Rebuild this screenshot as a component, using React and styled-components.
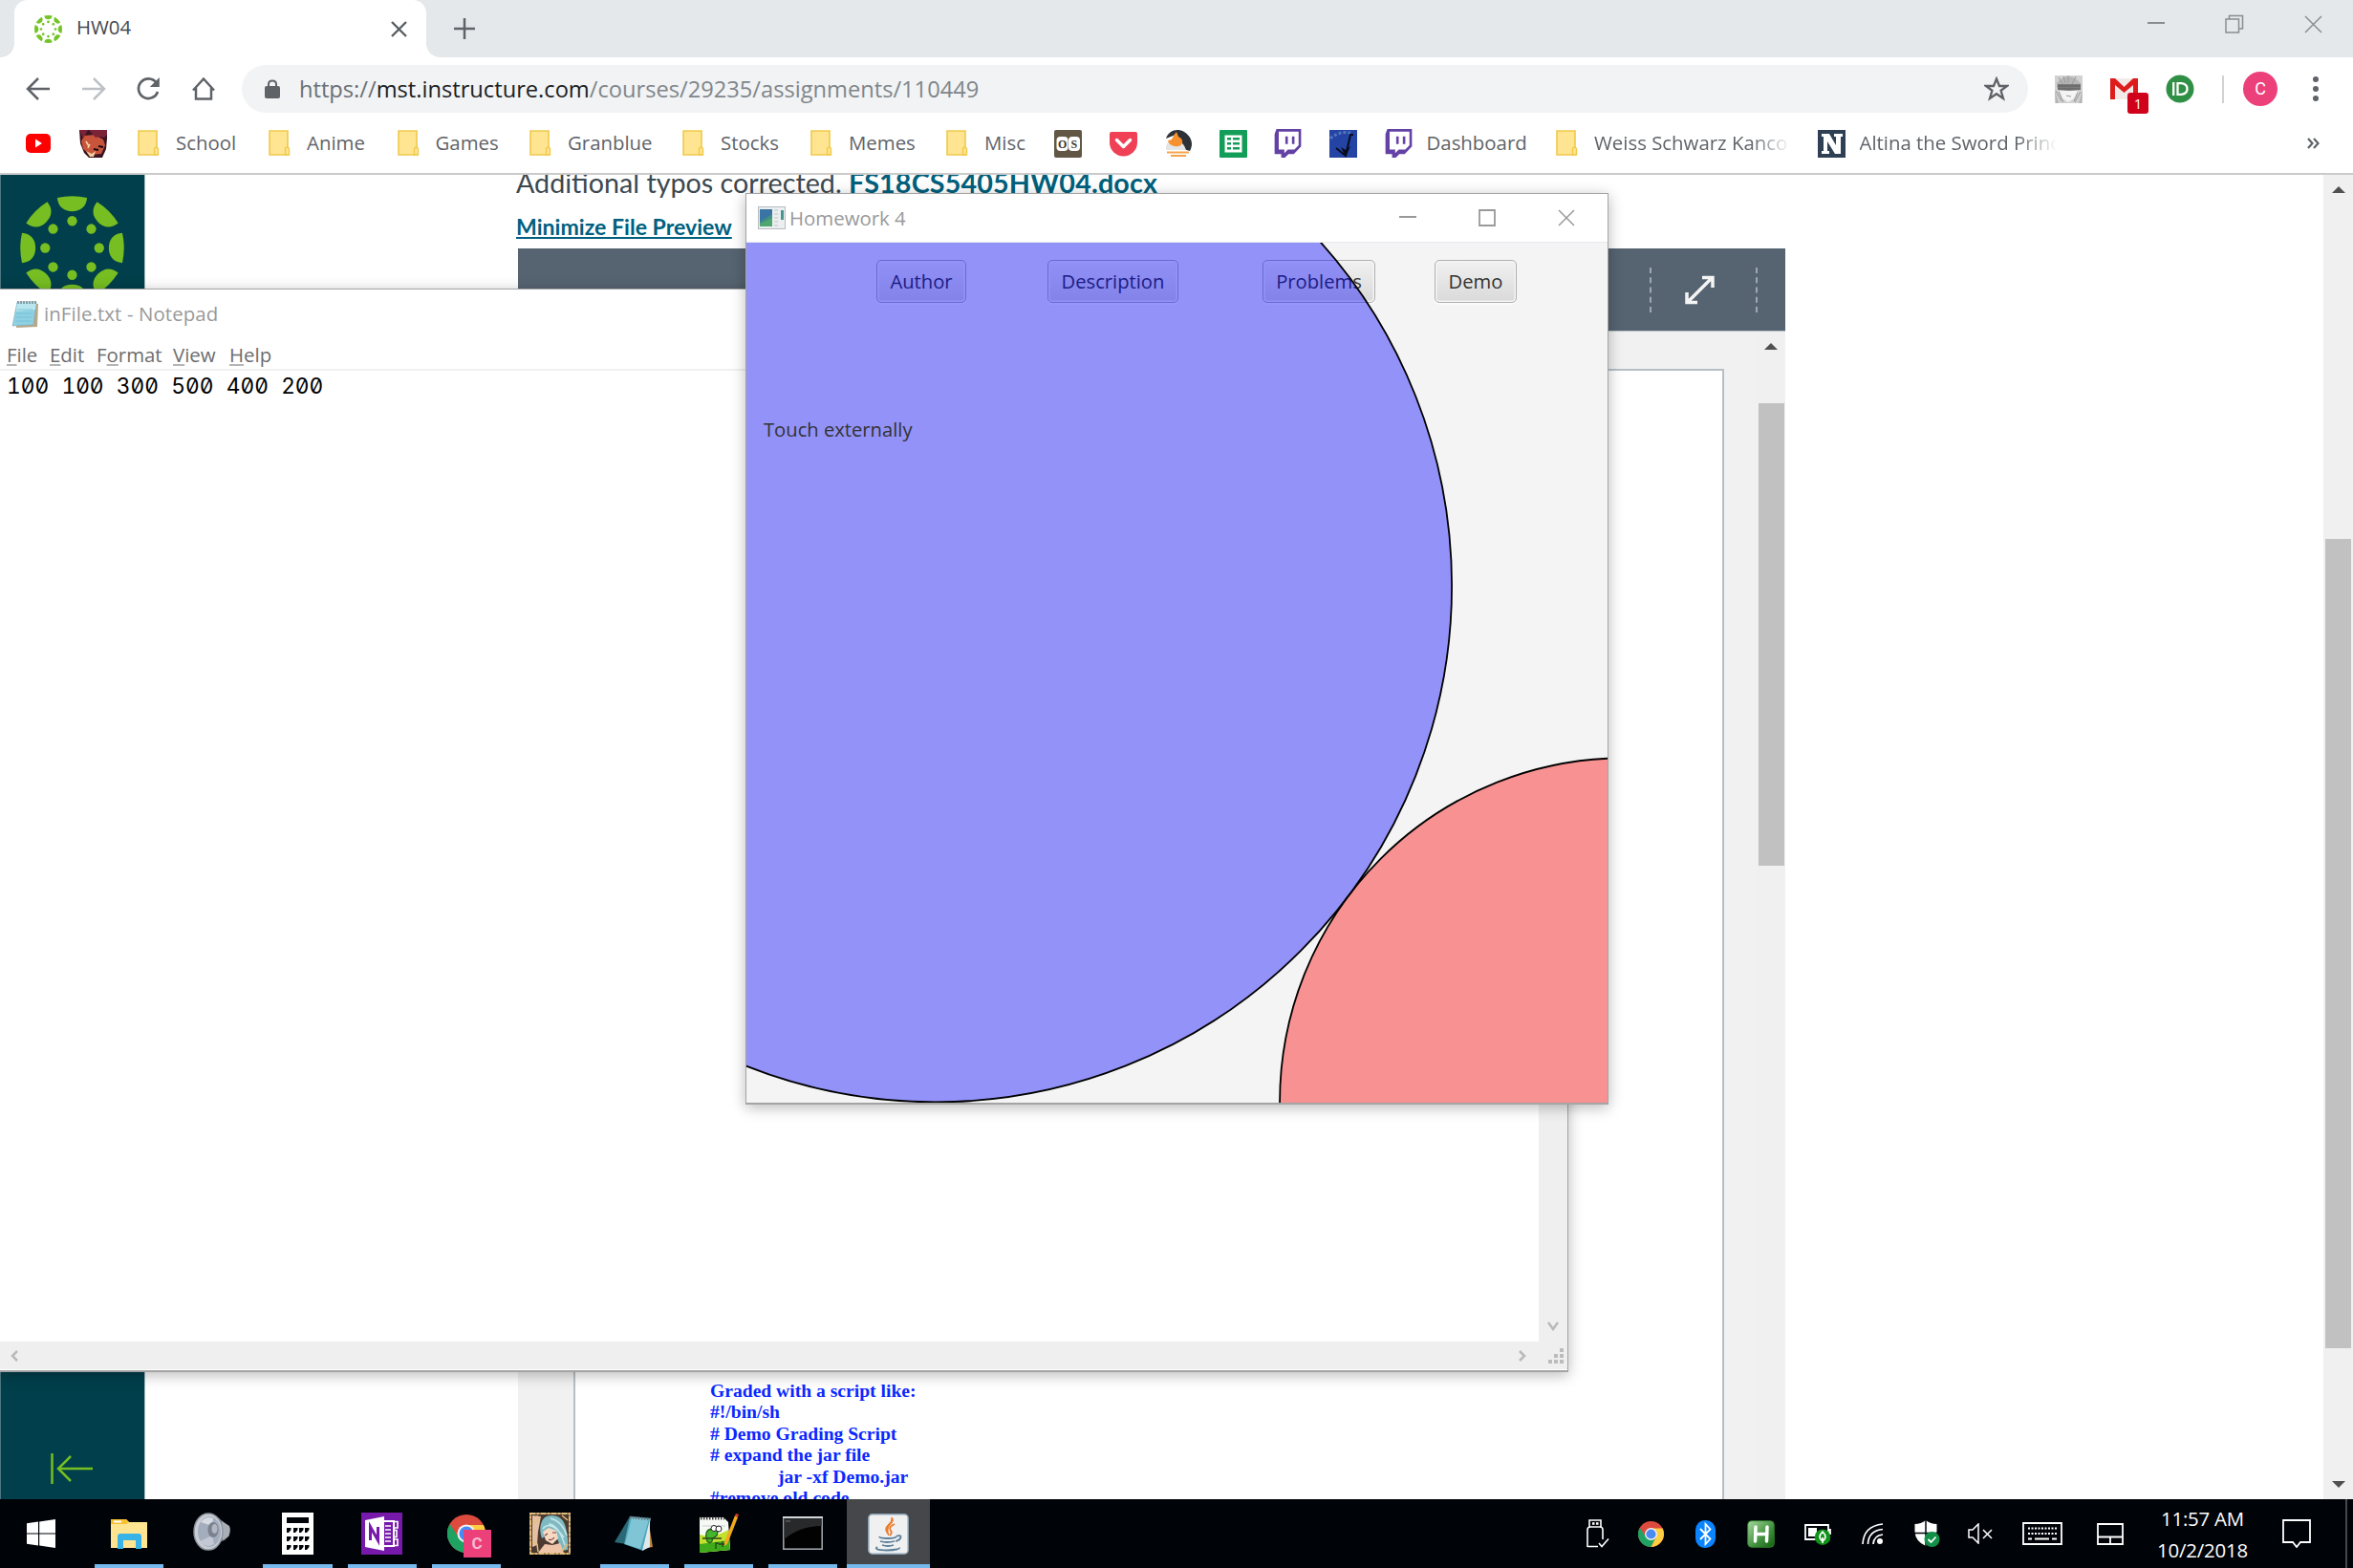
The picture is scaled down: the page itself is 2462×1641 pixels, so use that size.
import React from "react";
import styled, { createGlobalStyle } from "styled-components";

const ui = `"Open Sans", "Noto Sans", sans-serif`;

const GlobalStyle = createGlobalStyle`
  * { box-sizing: border-box; }
  body { margin: 0; overflow: hidden; background: #fff; font-family: ${ui}; }
  svg { display: block; flex: none; }
`;

/* ---------- shared ---------- */

const Desktop = styled.div`
  position: relative;
  display: flex;
  flex-direction: column;
  width: 2462px;
  height: 1641px;
  overflow: hidden;
`;

const Text = styled.span`
  flex: none;
  white-space: nowrap;
  font-size: ${(p) => p.$size || 20.4}px;
  line-height: 1.3;
  letter-spacing: ${(p) => p.$track || 0}px;
  color: ${(p) => p.$color || "inherit"};
`;

const Spacer = styled.div`
  flex: 1;
`;

/* ---------- browser frame ---------- */

const TabStrip = styled.div`
  display: flex;
  align-items: flex-start;
  height: 60px;
  flex: none;
  padding-left: 15px;
  background: #e4e8eb;
`;

const Tab = styled.div`
  position: relative;
  display: flex;
  align-items: center;
  width: 431px;
  height: 60px;
  padding: 0 20px 0 21px;
  background: #fff;
  border-radius: 14px 14px 0 0;
  color: #45494d;
  &::before,
  &::after {
    content: "";
    position: absolute;
    bottom: 0;
    width: 14px;
    height: 14px;
  }
  &::before {
    left: -14px;
    background: radial-gradient(circle at 0 0, transparent 13.5px, #fff 14px);
  }
  &::after {
    right: -14px;
    background: radial-gradient(circle at 100% 0, transparent 13.5px, #fff 14px);
  }
`;

const TabTitle = styled(Text)`
  margin-left: 15px;
  padding-bottom: 3px;
  flex: 1;
`;

const NewTab = styled.div`
  display: flex;
  align-items: center;
  height: 60px;
  margin-left: 29px;
`;

const WindowButtons = styled.div`
  display: flex;
  align-items: center;
  gap: ${(p) => p.$gap}px;
  padding-right: ${(p) => p.$right}px;
  height: 50px;
`;

const Toolbar = styled.div`
  display: flex;
  align-items: center;
  flex: none;
  height: 66px;
  padding: 0 27px;
  background: #fff;
`;

const NavButtons = styled.div`
  display: flex;
  gap: 31.5px;
  width: 226px;
`;

const Omnibox = styled.div`
  display: flex;
  align-items: center;
  width: 1869px;
  height: 50px;
  padding: 0 20px 0 24px;
  border-radius: 25px;
  background: #f1f3f4;
`;

const Url = styled(Text)`
  margin-left: 20px;
  flex: 1;
  color: #80868b;
  b {
    font-weight: 400;
    color: #202124;
  }
  i {
    font-style: normal;
    color: #6b7075;
  }
`;

const Extensions = styled.div`
  display: flex;
  align-items: center;
  gap: 29px;
  margin-left: 28px;
`;

const GmailBadge = styled.div`
  position: relative;
  width: 29px;
  height: 29px;
  span {
    position: absolute;
    left: 18px;
    top: 18px;
    width: 22px;
    height: 22px;
    border-radius: 3px;
    background: #d0021b;
    color: #fff;
    font: 15px/22px ${ui};
    text-align: center;
  }
`;

const Divider = styled.div`
  width: 2px;
  height: 29px;
  background: #d0d3d6;
`;

const Avatar = styled.div`
  width: 36px;
  height: 36px;
  margin: 0 7px 0 -9px;
  border-radius: 50%;
  background: #ec407a;
  color: #fff;
  font: 18px/36px Roboto, sans-serif;
  text-align: center;
`;

const BookmarkBar = styled.div`
  display: flex;
  align-items: center;
  flex: none;
  height: 57px;
  padding: 0 35px 7px 25px;
  border-bottom: 2px solid #cbcbcb;
  background: #fff;
  color: #5f6368;
`;

const Bookmark = styled.div`
  display: flex;
  align-items: center;
  flex: none;
  width: ${(p) => p.$width}px;
`;

const BookmarkLabel = styled(Text)`
  margin-left: ${(p) => p.$left}px;
  padding-bottom: 1px;
  ${(p) =>
    p.$fade &&
    `mask-image: linear-gradient(90deg, #000 ${p.$fade - 42}px, transparent ${p.$fade}px);`}
`;

/* ---------- web page ---------- */

const Page = styled.div`
  display: flex;
  flex: 1;
  min-height: 0;
  background: #fff;
`;

const CanvasNav = styled.nav`
  display: flex;
  flex-direction: column;
  justify-content: space-between;
  width: 152px;
  padding: 22px 0 15px 20px;
  border-left: 1px solid #4d7780;
  border-right: 1px solid #a9bcc2;
  background: #003f4b;
`;

const CollapseIcon = styled.div`
  padding-left: 31px;
`;

const Article = styled.main`
  flex: 1;
  min-width: 0;
  padding-left: 388px;
  overflow: hidden;
  display: flex;
  flex-direction: column;
`;

const Paragraph = styled.p`
  flex: none;
  margin: -9px 0 0;
  font: 28.7px/34px Lato, sans-serif;
  color: #3c484f;
  white-space: nowrap;
  b {
    color: #00607c;
    letter-spacing: 0.15px;
  }
`;

const PreviewLink = styled.a`
  flex: none;
  align-self: flex-start;
  height: 52px;
  padding-top: 15px;
  font: 700 23.1px/28px Lato, sans-serif;
  color: #006080;
  text-decoration: underline;
  text-decoration-thickness: 2px;
  text-underline-offset: 2px;
`;

const Preview = styled.section`
  display: flex;
  flex-direction: column;
  flex: 1;
  width: 1326px;
  margin-left: 2px;
  background: #f1f1f1;
`;

const PreviewTools = styled.div`
  display: flex;
  align-items: center;
  justify-content: flex-end;
  flex: none;
  height: 86px;
  padding-right: 29px;
  background: #566471;
  svg {
    margin: 0 42px 0 34px;
  }
`;

const DashedRule = styled.div`
  height: 47px;
  border-left: 2px dashed #9fa8b0;
`;

const PreviewBody = styled.div`
  display: flex;
  flex: 1;
  min-height: 0;
  border-top: 1px solid #b9c2c8;
`;

const Sheet = styled.div`
  display: flex;
  flex-direction: column;
  justify-content: flex-end;
  width: 1204px;
  margin: 39px 34px 0 58px;
  padding: 0 0 0 141px;
  border: 2px solid #b7bfc6;
  border-bottom: 0;
  background: #fff;
  overflow: hidden;
`;

const Script = styled.div`
  flex: none;
  margin-bottom: -10.5px;
  font: 700 19.6px/22.4px "Liberation Serif", serif;
  color: #0a28ff;
  white-space: pre;
`;

const ScriptLine = styled.div`
  padding-left: ${(p) => (p.$indent ? 71 : 0)}px;
`;

const ScrollTrack = styled.div`
  display: flex;
  flex-direction: column;
  align-items: center;
  flex: none;
  width: ${(p) => p.$width}px;
  padding: ${(p) => p.$pad};
  background: #f0f0f0;
`;

const ScrollThumb = styled.div`
  width: 27px;
  height: ${(p) => p.$height}px;
  margin: ${(p) => p.$top}px 0 auto;
  background: #c1c1c1;
`;

const Triangle = styled.div`
  flex: none;
  border: 7px solid transparent;
  border-top-width: ${(p) => (p.$down ? 7 : 0)}px;
  border-bottom-width: ${(p) => (p.$down ? 0 : 7)}px;
  border-${(p) => (p.$down ? "top" : "bottom")}-color: #505050;
`;

/* ---------- floating windows ---------- */

const AppWindow = styled.div`
  position: absolute;
  display: flex;
  flex-direction: column;
  left: ${(p) => p.$x}px;
  top: ${(p) => p.$y}px;
  width: ${(p) => p.$w}px;
  height: ${(p) => p.$h}px;
  border: solid #a4a4a4;
  border-width: 1px 1px 2px ${(p) => (p.$x > 0 ? 1 : 0)}px;
  background: #fff;
  box-shadow: 0 3px 14px rgba(0, 0, 0, 0.28);
`;

const TitleBar = styled.div`
  display: flex;
  align-items: center;
  flex: none;
  height: ${(p) => p.$height}px;
  padding-left: 12px;
  color: #999;
`;

const WindowTitle = styled(Text)`
  margin-left: 4px;
  flex: 1;
`;

const MenuBar = styled.div`
  display: flex;
  align-items: center;
  height: 34px;
  flex: none;
  padding: 2px 0 0 7px;
  border-bottom: 2px solid #f0f0f0;
  color: #6d6d6d;
`;

const MenuItem = styled(Text)`
  width: ${(p) => p.$w}px;
  u {
    text-decoration-thickness: 2px;
    text-underline-offset: 2px;
    text-decoration-color: #b5b5b5;
  }
`;

const EditorRow = styled.div`
  display: flex;
  flex: 1;
`;

const Editor = styled.pre`
  flex: 1;
  margin: 0;
  padding: 1px 0 0 7px;
  font: 22.7px/30px Inter, monospace;
  font-feature-settings: "tnum", "zero";
  word-spacing: 7.2px;
  color: #000;
`;

const NotepadScroll = styled.div`
  display: flex;
  flex-direction: ${(p) => (p.$side ? "column" : "row")};
  align-items: center;
  justify-content: ${(p) => (p.$side ? "flex-end" : "space-between")};
  flex: none;
  width: ${(p) => (p.$side ? "30px" : "auto")};
  height: ${(p) => (p.$side ? "auto" : "30px")};
  padding: ${(p) => (p.$side ? "0 0 11px" : "0 4px 0 10px")};
  background: #efefef;
  border-bottom: ${(p) => (p.$side ? 0 : 1)}px solid #fff;
`;

const ScrollEnd = styled.div`
  display: flex;
  align-items: center;
  gap: 22px;
`;

const Stage = styled.div`
  position: relative;
  flex: 1;
  overflow: hidden;
  background: #f4f4f4;
  border-top: 1px solid #e8e8ee;
`;

const ButtonRow = styled.div`
  display: flex;
  padding: 18px 0 0 136px;
`;

const FxButton = styled.button`
  width: ${(p) => p.$w}px;
  height: 45px;
  margin: 0 ${(p) => p.$after || 0}px 0 0;
  padding: 0 0 1px;
  border: 1.5px solid #b0b0b0;
  border-radius: 5px;
  background: linear-gradient(#f1f1f1, #d9d9d9);
  box-shadow: inset 0 0 0 1.5px #f4f4f4, 0 2px 0 #fafafa;
  font: 20.2px/38px ${ui};
  color: #333;
`;

const Shapes = styled.svg`
  position: absolute;
  inset: 0;
`;

const StageLabel = styled(Text)`
  position: absolute;
  left: 18px;
  top: 182px;
  color: #333;
`;

/* ---------- taskbar ---------- */

const Taskbar = styled.footer`
  display: flex;
  flex: none;
  height: 72px;
  background: #000308;
`;

const TaskItem = styled.div`
  position: relative;
  display: flex;
  align-items: center;
  justify-content: center;
  width: ${(p) => p.$width || 88.1}px;
  margin-left: ${(p) => (p.$active ? 2 : 0)}px;
  padding: 0 ${(p) => p.$shift || 0}px ${(p) => p.$lift || 0}px 0;
  background: ${(p) => (p.$active ? "#45474a" : "transparent")};
  &::after {
    content: "";
    position: absolute;
    bottom: 0;
    left: ${(p) => (p.$active ? 0 : 8)}px;
    right: ${(p) => (p.$active ? 0 : 8)}px;
    height: ${(p) => (p.$open || p.$active ? 4 : 0)}px;
    background: #76b9ed;
  }
`;

const ProfileBadge = styled.span`
  position: absolute;
  left: 41px;
  top: 32px;
  width: 29px;
  height: 29px;
  background: #ec407a;
  color: #f8bbd0;
  font: 700 17px/29px Roboto, sans-serif;
  text-align: center;
`;

const TrayItem = styled.div`
  display: flex;
  align-items: center;
  justify-content: center;
  width: ${(p) => p.$width}px;
`;

const Clock = styled.div`
  display: flex;
  flex-direction: column;
  align-items: center;
  justify-content: center;
  width: 127px;
  padding-top: 1px;
  color: #fff;
  font-size: 20.4px;
  line-height: 33px;
  letter-spacing: -0.2px;
`;

const ShowDesktop = styled.div`
  width: 8px;
  border-left: 2px solid #46484b;
`;

/* ---------- icons ---------- */

const CanvasMark = ({ size, color = "#76be22" }) => (
  <svg width={size} height={size} viewBox="-54 -54 108 108" fill={color}>
    {[0, 45, 90, 135, 180, 225, 270, 315].map((a) => (
      <g key={a} transform={`rotate(${a})`}>
        <path d="M-15.5 -52 Q0 -55.5 15.5 -52 C14.5 -42 8 -38 0 -38 C-8 -38 -14.5 -42 -15.5 -52Z" />
        <circle cy="-28" r="5.1" />
      </g>
    ))}
  </svg>
);

const Cross = ({ size, color = "#8a8d90", width = 1.5 }) => (
  <svg width={size} height={size} viewBox={`0 0 ${size} ${size}`} stroke={color} strokeWidth={width}>
    <path d={`M1 1L${size - 1} ${size - 1}M${size - 1} 1L1 ${size - 1}`} />
  </svg>
);

const Dash = ({ size = 18, color = "#8a8d90" }) => (
  <svg width={size} height="22">
    <path d={`M0 10H${size}`} stroke={color} strokeWidth="2" />
  </svg>
);

const FolderIcon = () => (
  <svg width="24" height="30" viewBox="0 0 24 30">
    <path d="M2 2H21V27H2Z" fill="#ffe591" stroke="#efc94c" strokeWidth="1.6" />
    <path d="M18.5 27V20.5Q20.5 17.5 22.5 20.5V27Z" fill="#ffe591" stroke="#efc94c" strokeWidth="1.4" />
  </svg>
);

const Twitch = () => (
  <svg width="29" height="30" viewBox="0 0 24 24" preserveAspectRatio="none" fill="#6441a5">
    <path d="M2.149 0L.537 4.119v16.836h5.731V24h3.224l3.045-3.045h4.657l6.269-6.269V0zM21.313 13.612l-3.582 3.582H12l-3.045 3.045v-3.045H4.119V2.149h17.194zM17.731 6.269v6.262h-2.149V6.269zM12 6.269v6.262H9.851V6.269z" />
  </svg>
);

const Chrome = ({ size }) => (
  <svg width={size} height={size} viewBox="-24 -24 48 48">
    <circle r="24" fill="#dd4b3e" />
    <path d="M-20.8 -12A24 24 0 0 0 0 24L9.5 5.5L-9.5 5.5Z" fill="#1ea362" />
    <path d="M21.5 -10.8H0L9.5 5.5L0 24A24 24 0 0 0 21.5 -10.8Z" fill="#ffcd40" />
    <circle r="11.5" fill="#f1f1f1" />
    <circle r="9" fill="#4a8af4" />
  </svg>
);

const Chevron = ({ d, w = 10, h = 12 }) => (
  <svg width={w} height={h} viewBox={`0 0 ${w} ${h}`}>
    <path d={d} fill="none" stroke="#b9b9b9" strokeWidth="2.5" />
  </svg>
);

const NotepadIcon = ({ size = 30 }) => (
  <svg width={size} height={size} viewBox="0 0 30 30">
    <path d="M8 3L28 4L27 28L5 29Z" fill="#b9a887" />
    <path d="M6 2L26 2L23 26L1 27Z" fill="#8fd0e2" stroke="#7fa9b5" strokeWidth=".6" />
    <path d="M6 2L26 2L25 10L5 12Z" fill="#b9e6ef" />
    <path d="M7 1v3M10 1v3M13 1v3M16 1v3M19 1v3M22 1v3M25 1v3" stroke="#4c5a60" />
    <path d="M6 10H22M5.5 14H21.5M5 18H21M4.5 22H20.5" stroke="#69bcd2" strokeWidth=".7" />
  </svg>
);

const NavIcons = () => (
  <NavButtons>
    {["#5f6368", "#bdc1c6"].map((c, i) => (
      <svg key={c} width="26" height="26" viewBox="0 0 26 26" fill="none" stroke={c} strokeWidth="2.5">
        <path d={i ? "M1 13H23M13 2L24 13L13 24" : "M25 13H3M13 2L2 13L13 24"} />
      </svg>
    ))}
    <svg width="26" height="26" viewBox="0 0 26 26" fill="none" stroke="#5f6368" strokeWidth="2.7">
      <path d="M21.5 6.5A10.300 10.300 0 1 0 23 16" />
      <path d="M24.8 1V11H14.8Z" fill="#5f6368" stroke="none" />
    </svg>
    <svg width="26" height="26" viewBox="0 0 26 26" fill="none" stroke="#5f6368" strokeWidth="2.5">
      <path d="M5 12V23.500H21V12M2 14.500L13 2.500L24 14.500" />
    </svg>
  </NavButtons>
);

const bookmarkIcons = {
  youtube: (
    <svg width="30" height="22" viewBox="0 0 30 22">
      <rect x="2" y="1" width="26" height="20" rx="5" fill="#f00" />
      <path d="M12 6.500L19 11L12 15.500Z" fill="#fff" />
    </svg>
  ),
  imp: (
    <svg width="29" height="29" viewBox="0 0 29 29">
      <path d="M0 0H29V9L28 20L24 29H10L5 24L1 14Z" fill="#3a1420" />
      <path d="M5 6L16 5L25 10L27 16L23 25L12 26L4 20L2 12Z" fill="#c9543c" />
      <path d="M0 0H9L4 9ZM10 0L17 8L21 7L26 8L29 5V0Z" fill="#7d2338" />
      <path d="M7 12L10 17M11 15L9 19" stroke="#f4d2a0" strokeWidth="1.600" fill="none" />
      <path d="M7 22L13 25L17 22L15 28H11Z" fill="#f1cf9f" />
      <path d="M15 20L20 21M20 17L25 18" stroke="#160b0e" strokeWidth="2" />
    </svg>
  ),
  os: (
    <svg width="29" height="29" viewBox="0 0 29 29">
      <rect width="29" height="29" rx="2" fill="#625645" />
      <rect x="2.500" y="7" width="12" height="15" rx="4" fill="#fff" />
      <rect x="15" y="7" width="12" height="15" rx="4" fill="#fff" />
      <text x="4" y="19" fontFamily="Liberation Serif" fontWeight="700" fontSize="12" fill="#3f372c">O</text>
      <text x="17.500" y="19" fontFamily="Liberation Serif" fontWeight="700" fontSize="12" fill="#3f372c">S</text>
    </svg>
  ),
  pocket: (
    <svg width="29" height="29" viewBox="0 0 29 29">
      <path d="M2 2H27Q29 2 29 4V13A14.500 14.500 0 0 1 0 13V4Q0 2 2 2Z" fill="#ef4056" />
      <path d="M7.500 10.500L14.500 17.500L21.500 10.500" fill="none" stroke="#fff" strokeWidth="3.500" strokeLinecap="round" strokeLinejoin="round" />
    </svg>
  ),
  bird: (
    <svg width="30" height="30" viewBox="0 0 30 30">
      <path d="M2 10C5 1 14 -1 21 3C29 8 31 16 27 23L20 21L12 6Z" fill="#2d3138" />
      <path d="M2 22Q1 13 8 13H17Q21 16 23 22Z" fill="#e4e5e7" />
      <path d="M13 3L15 8Q20 10 19 15Q17 19 11 18Q5 17 4 12Q8 12 9 9Q10 6 13 3Z" fill="#f7912d" />
      <path d="M3 24.500H26M7 28H23" stroke="#f5a34d" strokeWidth="1.800" />
    </svg>
  ),
  sheets: (
    <svg width="29" height="29" viewBox="0 0 29 29">
      <rect width="29" height="29" rx="1" fill="#129d58" />
      <path d="M5.500 5.500H23.500V23.500H5.500Z" fill="#fff" />
      <path d="M8 8H12V10.500H8ZM14 8H21V10.500H14ZM8 13H12V15.500H8ZM14 13H21V15.500H14ZM8 18H12V20.500H8ZM14 18H21V20.500H14Z" fill="#129d58" />
    </svg>
  ),
  twitch: <Twitch />,
  check: (
    <svg width="29" height="29" viewBox="0 0 29 29">
      <rect width="29" height="29" fill="#2344a4" />
      <path d="M1 9Q10 1 22 3" stroke="#5573bd" strokeWidth="3" fill="none" strokeDasharray="3 2" />
      <path d="M7 19L17 27L22 5H25" stroke="#070b1c" strokeWidth="2" fill="none" />
      <path d="M12 18L17 28L22 17L17 21Z" fill="#070b1c" />
    </svg>
  ),
  novel: (
    <svg width="29" height="29" viewBox="0 0 29 29">
      <rect width="29" height="29" fill="#2f4054" />
      <path d="M4 4H12L19 16V7H17V4H26V7H24V25H18L10 12V22H12V25H4V22H6V7H4Z" fill="#fff" />
    </svg>
  ),
};

const bookmarks = [
  { icon: "youtube", width: 58 },
  { icon: "imp", width: 60 },
  { folder: true, label: "School", width: 137 },
  { folder: true, label: "Anime", width: 134.5 },
  { folder: true, label: "Games", width: 138.5 },
  { folder: true, label: "Granblue", width: 160 },
  { folder: true, label: "Stocks", width: 134 },
  { folder: true, label: "Memes", width: 142 },
  { folder: true, label: "Misc", width: 114 },
  { icon: "os", width: 58 },
  { icon: "pocket", width: 57 },
  { icon: "bird", width: 58 },
  { icon: "sheets", width: 57 },
  { icon: "twitch", width: 58 },
  { icon: "check", width: 58 },
  { icon: "twitch", label: "Dashboard", width: 178 },
  { folder: true, label: "Weiss Schwarz Kanco", width: 275, fade: 206 },
  { icon: "novel", label: "Altina the Sword Princ", width: 260, fade: 206 },
];

const task = {
  start: (
    <svg width="30" height="30" viewBox="0 0 30 30" fill="#fff">
      <path d="M0 4.300L12 2.600V14.400H0ZM13.200 2.400L30 0V14.400H13.200ZM0 15.600H12V27.400L0 25.700ZM13.200 15.600H30V30L13.200 27.600Z" />
    </svg>
  ),
  explorer: (
    <svg width="39" height="32" viewBox="0 0 39 32">
      <path d="M0 1H16L19 4H38V31H0Z" fill="#ffe591" />
      <path d="M0 1H16L19 4L16 6H0Z" fill="#f8c130" />
      <path d="M3 2.500H11V4.500H3Z" fill="#fff" />
      <path d="M7 32V19Q7 16 10 16H29Q32 16 32 19V32H26V23H13V32Z" fill="#38b3e8" />
    </svg>
  ),
  volume: (
    <svg width="40" height="40" viewBox="0 0 40 40">
      <path d="M17 1L27 6L36 13Q39 16 38 24L33 29L27 31L16 39Z" fill="#6f747d" />
      <path d="M30 9L38 14Q40 19 37 25L31 29Z" fill="#a9aeb7" />
      <ellipse cx="16" cy="20" rx="15" ry="19" fill="#c9cdd4" stroke="#8f959f" strokeWidth="1.500" />
      <ellipse cx="17" cy="20" rx="12" ry="16" fill="#a3adbd" />
      <path d="M8 10Q14 3 21 6L20 14Z" fill="#d5dae3" />
      <path d="M7 30Q14 38 22 33L20 24Z" fill="#c2c9d4" />
      <ellipse cx="21" cy="18" rx="5.500" ry="8" fill="#7b818d" />
      <ellipse cx="22.500" cy="17" rx="3" ry="5" fill="#b3b9c4" />
    </svg>
  ),
  calc: (
    <svg width="33" height="44" viewBox="0 0 33 44">
      <path d="M0 0H33V44H0Z" fill="#fff" />
      <path d="M5 5H28V11H5Z" fill="#000308" />
      {[16, 25, 34].map((y) =>
        [5, 12, 18, 24].map((x) => <path key={`${x}-${y}`} d={`M${x} ${y}h4.500v2l-2.500 3h-2z`} fill="#000308" />)
      )}
    </svg>
  ),
  onenote: (
    <svg width="43" height="44" viewBox="0 0 43 44">
      <rect width="43" height="44" fill="#7719aa" />
      <path d="M24 9H34V35H24" fill="none" stroke="#fff" strokeWidth="2" />
      <path d="M35 9.500H38V16H35M35 18.500H37V25.500H35M35 28H38V34.500H35" fill="none" stroke="#fff" strokeWidth="1.600" />
      <path d="M25 14H31M25 18H31M25 22H31M25 26H31M25 30H31" stroke="#fff" strokeWidth="1.600" />
      <path d="M4 8L24 4V40L4 36Z" fill="#fff" />
      <path d="M9.500 29V15L17.500 29V15" fill="none" stroke="#7719aa" strokeWidth="3" />
    </svg>
  ),
  girl: (
    <svg width="43" height="44" viewBox="0 0 43 44">
      <rect width="43" height="44" fill="#b08d58" />
      <rect x="2" y="2" width="39" height="40" fill="#4b3a30" />
      <path d="M3 3L12 4L9 20L8 34L3 36Z" fill="#e6bfa2" />
      <path d="M12 12Q14 3 23 3Q35 3 38 16Q41 27 40 39L33 40Q31 28 24 20L13 27Q10 18 12 12Z" fill="#7fbac2" />
      <path d="M14 20L20 16L28 19L30 27L24 33L17 29Z" fill="#f7d8c3" />
      <path d="M9 42L16 33L24 34L32 32L36 42Z" fill="#efc5a9" />
      <path d="M14 17Q22 7 36 26M20 12Q30 12 37 34M22 6Q34 9 39 24" stroke="#c6e6e9" fill="none" strokeWidth="1.500" />
      <path d="M16 24L19 22M24 21L28 21M20 28Q23 30 26 26" stroke="#7a4038" strokeWidth="1.200" fill="none" />
      <path d="M3 12L9 8L8 3M3 30L8 33L9 41M34 3L40 8M33 41L40 33" stroke="#e3c07e" strokeWidth="1.500" fill="none" />
      <rect x="1" y="1" width="41" height="42" fill="none" stroke="#e0bd7d" strokeWidth="2" strokeDasharray="5 2 2 2" />
    </svg>
  ),
  notepad: (
    <svg width="42" height="40" viewBox="0 0 42 40">
      <path d="M35 4L40 34L34 35Z" fill="#b5853d" />
      <path d="M16 2L12 31L0 29Z" fill="#2b6876" />
      <path d="M16 2L38 4L30 38L10 31Z" fill="#4fa5ba" />
      <path d="M18 3L36 5L27 36L11 31Z" fill="#8fd0de" opacity=".75" />
      <path d="M37 5L37 34L29 38Z" fill="#dfe8ea" />
      <path d="M16 3L38 5" stroke="#6b777c" strokeWidth="3" strokeDasharray="1.500 1.500" />
    </svg>
  ),
  npp: (
    <svg width="42" height="42" viewBox="0 0 42 42">
      <path d="M1 4H26L31 9L33 38L1 41Z" fill="#f7faf4" />
      <path d="M1 22Q16 26 31 17L33 38L1 41Z" fill="#c2e02e" />
      <path d="M1 32L32 28L33 38L1 41Z" fill="#3fab1b" />
      <path d="M2 5H27" stroke="#3c3c3c" strokeWidth="3" strokeDasharray="1.500 1.500" />
      <path d="M4 13H28" stroke="#c5cdd6" />
      <path d="M9 29Q5 17 14 16Q22 16 19 23Q14 26 14 29Q12 32 9 29Z" fill="#45b52c" stroke="#215f14" strokeWidth="1.300" />
      <circle cx="16" cy="15.500" r="3" fill="#fff" stroke="#222" />
      <circle cx="21" cy="16" r="3" fill="#fff" stroke="#222" />
      <path d="M4 26H24M18 30V37M18 31H21M21 32H28M25 29V35" stroke="#25451c" strokeWidth="1.300" />
      <path d="M27 30L27 34L30 32L41 4L38 2Z" fill="#f3a81e" />
      <path d="M38 2L39 0L42 1L41 4Z" fill="#cf3d2e" />
    </svg>
  ),
  cmd: (
    <svg width="42" height="35" viewBox="0 0 42 35">
      <rect x=".8" y=".8" width="40.400" height="33.400" fill="#020202" stroke="#9ba1a8" strokeWidth="1.600" />
      <path d="M1.500 2H40.500V10Q18 10 1.500 24Z" fill="#27292b" />
      <path d="M0 1H42" stroke="#d3d6d9" strokeWidth="2" />
      <path d="M3 5H8" stroke="#777" />
    </svg>
  ),
  java: (
    <svg width="43" height="43" viewBox="0 0 43 43">
      <rect x=".8" y=".8" width="41.400" height="41.400" rx="4" fill="#f0f0f0" stroke="#8ba2b3" strokeWidth="1.500" />
      <path d="M25 4Q26 8 21 12Q16 16 22 23Q19 15 24 11Q28 7 25 4Z" fill="#ea7b2a" stroke="#ea7b2a" />
      <path d="M28 11Q21 14 24 18Q26 20 23 23" fill="none" stroke="#ea7b2a" strokeWidth="1.800" />
      <path d="M12 24Q12 26 21 26Q29 26 30 24M13 29Q20 31 28 29M15 33Q21 35 27 33M30 23.500Q36 22 34 26Q33 28 29 29M10 35Q5 38 20 38.500Q34 38 33 35.500" fill="none" stroke="#5b7f9b" strokeWidth="1.800" />
    </svg>
  ),
};

const tray = {
  usb: (
    <svg width="24" height="30" viewBox="0 0 24 30" fill="none" stroke="#fff" strokeWidth="1.600">
      <path d="M3 8V1H15V8M1 29V11Q1 8 4 8H14Q17 8 17 11V21M1 28.500H12M13 25L16 28.500L23 20.500" />
      <path d="M6 4.500H8.500M10 4.500H12.500" strokeWidth="2.500" />
    </svg>
  ),
  bluetooth: (
    <svg width="21" height="29" viewBox="0 0 21 29">
      <rect width="21" height="29" rx="10" fill="#0a84ff" />
      <path d="M5 9L15.500 19.500L10.500 25V4L15.500 9.500L5 20" fill="none" stroke="#fff" strokeWidth="1.800" />
    </svg>
  ),
  hkey: (
    <svg width="29" height="29" viewBox="0 0 29 29">
      <defs>
        <linearGradient id="hk" x1="0" y1="0" x2="1" y2="1">
          <stop offset="0" stopColor="#a5d99d" />
          <stop offset=".6" stopColor="#3f8f3d" />
          <stop offset="1" stopColor="#14600f" />
        </linearGradient>
      </defs>
      <rect x=".7" y=".7" width="27.600" height="27.600" rx="4" fill="url(#hk)" stroke="#2d7a2b" />
      <path d="M9 7L8.500 22M21 7L20.500 22M9 14.500H21" stroke="#fff" strokeWidth="3.500" strokeLinecap="round" />
    </svg>
  ),
  battery: (
    <svg width="28" height="24" viewBox="0 0 28 24">
      <path d="M1 3H25V18H1ZM25 8H27V12H25" fill="none" stroke="#fff" strokeWidth="1.800" />
      <path d="M4 6H13V15H4Z" fill="#fff" />
      <circle cx="19" cy="15.700" r="8.300" fill="#0f9318" />
      <path d="M19 22V16M19 10Q13 16 19 20Q25 16 19 10Z" fill="none" stroke="#fff" strokeWidth="1.700" />
    </svg>
  ),
  wifi: (
    <svg width="23" height="23" viewBox="0 0 23 23" fill="none" stroke="#fff" strokeWidth="1.700">
      <path d="M1 22Q2 3 22 1M6.500 22Q7 8 22 6.500M12 22Q12.500 13 22 12" />
      <circle cx="19" cy="19" r="3" fill="#fff" stroke="none" />
    </svg>
  ),
  shield: (
    <svg width="27" height="29" viewBox="0 0 27 29">
      <path d="M12 0Q17 4 23.500 4V12Q22 22 12 27Q1 22 .500 12V4Q7 4 12 0Z" fill="#fff" />
      <path d="M12 0V27M0 13.500H24" stroke="#000308" strokeWidth="1.500" />
      <circle cx="18.500" cy="20" r="8" fill="#129048" />
      <path d="M14.500 20L17.500 23L22.500 17.500" fill="none" stroke="#fff" strokeWidth="1.800" />
    </svg>
  ),
  mute: (
    <svg width="26" height="22" viewBox="0 0 26 22" fill="none" stroke="#fff" strokeWidth="1.500">
      <path d="M1 7H5L11 1V21L5 15H1ZM16 7L25 16M25 7L16 16" />
    </svg>
  ),
  keyboard: (
    <svg width="42" height="24" viewBox="0 0 42 24" fill="none" stroke="#fff" strokeWidth="1.800">
      <path d="M1 1H41V23H1Z" />
      <path d="M6 6.500H37M6 12H37" strokeDasharray="2 1.500" />
      <path d="M6 17.500H10M13 17.500H28M31 17.500H36" />
    </svg>
  ),
  touchpad: (
    <svg width="28" height="23" viewBox="0 0 28 23" fill="none" stroke="#fff" strokeWidth="1.800">
      <path d="M1 1H27V22H1ZM1 14.500H27M14 14.500V22" />
    </svg>
  ),
  notice: (
    <svg width="30" height="30" viewBox="0 0 30 30" fill="none" stroke="#fff" strokeWidth="1.800">
      <path d="M1 1H29V24H19L15 29L11 24H1Z" />
    </svg>
  ),
};

const ExtensionIcons = () => (
  <Extensions>
    <svg width="29" height="29" viewBox="0 0 29 29">
      <path d="M0 0H29V29H0Z" fill="#d2d2d2" />
      <path d="M5 16H24L20 24L14 28L8 24Z" fill="#f4f4f4" />
      <path d="M2 8Q14 -6 27 8V13L14 9L2 13ZM0 16L4 29H1ZM29 16L25 29H28Z" fill="#b5b5b5" />
      <path d="M3 9H27V15L15 16L3 15Z" fill="#7c7c7c" />
      <path d="M3 11H27M3 14H27" stroke="#5e5e5e" />
      <path d="M4 2L8 9M9 1L11 8M14 0V8M22 1L18 9M1 16L7 27M4 17L9 28M27 17L21 28M24 18L20 27M12 21L17 22" stroke="#9a9a9a" />
    </svg>
    <GmailBadge>
      <svg width="29" height="25" viewBox="0 0 29 25">
        <path d="M0 3H29V25H0Z" fill="#f3e9e9" />
        <path d="M0 3H5L14.500 12L24 3H29V25H24V10L14.500 18L5 10V25H0Z" fill="#dd1c1c" />
      </svg>
      <span>1</span>
    </GmailBadge>
    <svg width="30" height="30" viewBox="0 0 30 30">
      <circle cx="15" cy="15" r="14.500" fill="#2f8f45" />
      <path d="M8.200 8V22M12.500 9.200H16.500Q22.500 10 22.500 15Q22.500 20 16.500 20.800H12.500Z" fill="none" stroke="#fff" strokeWidth="2.300" />
    </svg>
    <Divider />
    <Avatar>C</Avatar>
    <svg width="8" height="28" viewBox="0 0 8 28" fill="#5f6368">
      <circle cx="4" cy="4" r="3" />
      <circle cx="4" cy="14" r="3" />
      <circle cx="4" cy="24" r="3" />
    </svg>
  </Extensions>
);

/* ---------- composition ---------- */

const BrowserFrame = () => (
  <>
    <TabStrip>
      <Tab>
        <CanvasMark size={29} color="#74c425" />
        <TabTitle>HW04</TabTitle>
        <Cross size={17} color="#5a5e62" width={2.4} />
      </Tab>
      <NewTab>
        <svg width="22" height="22">
          <path d="M11 0V22M0 11H22" stroke="#5f6368" strokeWidth="2.500" />
        </svg>
      </NewTab>
      <Spacer />
      <WindowButtons $gap={63} $right={32}>
        <Dash />
        <svg width="20" height="20" fill="none" stroke="#8a8d90" strokeWidth="1.500">
          <path d="M1 5H14.500V19H1ZM4.500 5V1.500H18.500V15H14.500" />
        </svg>
        <Cross size={19} />
      </WindowButtons>
    </TabStrip>
    <Toolbar>
      <NavIcons />
      <Omnibox>
        <svg width="16" height="20" viewBox="0 0 16 20">
          <path d="M4 8V5Q4 1.500 8 1.500Q12 1.500 12 5V8" fill="none" stroke="#5f6368" strokeWidth="2" />
          <rect y="7" width="16" height="13" rx="2" fill="#5f6368" />
        </svg>
        <Url $size={23.66}>
          <i>https://</i>
          <b>mst.instructure.com</b>/courses/29235/assignments/110449
        </Url>
        <svg width="26" height="26" viewBox="0 0 26 26">
          <path d="M13 2.500L16 10H24L17.600 14.800L20 23L13 18.200L6 23L8.400 14.800L2 10H10Z" fill="none" stroke="#5f6368" strokeWidth="2.300" />
        </svg>
      </Omnibox>
      <ExtensionIcons />
    </Toolbar>
    <BookmarkBar>
      {bookmarks.map((b, i) => (
        <Bookmark key={i} $width={b.width}>
          {b.folder ? <FolderIcon /> : bookmarkIcons[b.icon]}
          {b.label && (
            <BookmarkLabel $left={b.folder ? 17 : 14.5} $fade={b.fade}>
              {b.label}
            </BookmarkLabel>
          )}
        </Bookmark>
      ))}
      <Spacer />
      <svg width="13" height="12" fill="none" stroke="#5f6368" strokeWidth="2.200">
        <path d="M1 1L5.500 6L1 11M7 1L11.500 6L7 11" />
      </svg>
    </BookmarkBar>
  </>
);

const script = [
  "Graded with a script like:",
  "#!/bin/sh",
  "# Demo Grading Script",
  "# expand the jar file",
  "jar -xf Demo.jar",
  "#remove old code",
];

const WebPage = () => (
  <Page>
    <CanvasNav>
      <CanvasMark size={109} />
      <CollapseIcon>
        <svg width="46" height="34" fill="none" stroke="#76be22" strokeWidth="2.500">
          <path d="M2.500 1V33M45 17H9M22 4L9 17L22 30" />
        </svg>
      </CollapseIcon>
    </CanvasNav>
    <Article>
      <Paragraph>
        Additional typos corrected. <b>FS18CS5405HW04.docx</b>
      </Paragraph>
      <PreviewLink>Minimize File Preview</PreviewLink>
      <Preview>
        <PreviewTools>
          <DashedRule />
          <svg width="33" height="33" viewBox="0 0 33 33" fill="none" stroke="#f5f5f5" strokeWidth="3.500">
            <path d="M4 29L29 4M19 3.500H30V14M3 19V29.500H14" />
          </svg>
          <DashedRule />
        </PreviewTools>
        <PreviewBody>
          <Sheet>
            <Script>
              {script.map((line) => (
                <ScriptLine key={line} $indent={line.startsWith("jar")}>
                  {line}
                </ScriptLine>
              ))}
            </Script>
          </Sheet>
          <ScrollTrack $width={30} $pad="12px 0 0">
            <Triangle />
            <ScrollThumb $top={56} $height={484} />
          </ScrollTrack>
        </PreviewBody>
      </Preview>
    </Article>
    <ScrollTrack $width={31} $pad="12px 0 12px">
      <Triangle />
      <ScrollThumb $top={362} $height={847} />
      <Triangle $down />
    </ScrollTrack>
  </Page>
);

const Notepad = () => (
  <AppWindow $x={0} $y={302} $w={1641} $h={1134}>
    <TitleBar $height={51}>
      <NotepadIcon />
      <WindowTitle $track={0.1}>inFile.txt - Notepad</WindowTitle>
    </TitleBar>
    <MenuBar>
      <MenuItem $w={45}><u>F</u>ile</MenuItem>
      <MenuItem $w={49}><u>E</u>dit</MenuItem>
      <MenuItem $w={80}>F<u>o</u>rmat</MenuItem>
      <MenuItem $w={59}><u>V</u>iew</MenuItem>
      <MenuItem $w={50}><u>H</u>elp</MenuItem>
    </MenuBar>
    <EditorRow>
      <Editor>100 100 300 500 400 200</Editor>
      <NotepadScroll $side>
        <Chevron w={12} h={10} d="M1 1L6 8L11 1" />
      </NotepadScroll>
    </EditorRow>
    <NotepadScroll>
      <Chevron d="M8 1L3 6L8 11" />
      <ScrollEnd>
        <Chevron d="M2 1L7 6L2 11" />
        <svg width="16" height="16" fill="#bcbcbc">
          <path d="M12 0h4v4h-4zM6 6h4v4h-4zM12 6h4v4h-4zM0 12h4v4h-4zM6 12h4v4h-4zM12 12h4v4h-4z" />
        </svg>
      </ScrollEnd>
    </NotepadScroll>
  </AppWindow>
);

const Homework = () => (
  <AppWindow $x={780} $y={202} $w={903} $h={954}>
    <TitleBar $height={50}>
      <svg width="29" height="24" viewBox="0 0 29 24">
        <rect x=".5" y=".5" width="28" height="23" fill="#eceff0" stroke="#b5bcc0" />
        <rect x="2" y="3" width="13" height="18" fill="#3f8f87" />
        <path d="M2 3H15V8L2 16Z" fill="#3a74a4" />
        <path d="M2 21V18L15 12V21Z" fill="#4fa66f" />
        <path d="M17 4H21M17 8H21M17 12H21M17 16H21M17 20H21" stroke="#bfc6c9" />
        <rect x="24" y="4" width="3" height="10" fill="#4a948f" />
      </svg>
      <WindowTitle>Homework 4</WindowTitle>
      <WindowButtons $gap={65} $right={34}>
        <Dash color="#999" />
        <svg width="18" height="18" fill="none" stroke="#999" strokeWidth="1.800">
          <path d="M1 1H17V17H1Z" />
        </svg>
        <Cross size={18} color="#999" />
      </WindowButtons>
    </TitleBar>
    <Stage>
      <ButtonRow>
        <FxButton $w={94} $after={85}>Author</FxButton>
        <FxButton $w={137} $after={88}>Description</FxButton>
        <FxButton $w={118} $after={62}>Problems</FxButton>
        <FxButton $w={86}>Demo</FxButton>
      </ButtonRow>
      <Shapes width="901" height="901" viewBox="0 0 500.5 500.5" stroke="#000" strokeWidth="1">
        <circle cx="110" cy="199.600" r="300" fill="#00f" fillOpacity=".4" />
        <circle cx="510" cy="499.600" r="200" fill="#f00" fillOpacity=".4" />
      </Shapes>
      <StageLabel $size={20.2}>Touch externally</StageLabel>
    </Stage>
  </AppWindow>
);

const SystemTaskbar = () => (
  <Taskbar>
    <TaskItem $width={91.3} $shift={5}>{task.start}</TaskItem>
    <TaskItem $open>{task.explorer}</TaskItem>
    <TaskItem $lift={4} $shift={3}>{task.volume}</TaskItem>
    <TaskItem $open>{task.calc}</TaskItem>
    <TaskItem $open>{task.onenote}</TaskItem>
    <TaskItem $open>
      <Chrome size={40} />
      <ProfileBadge>C</ProfileBadge>
    </TaskItem>
    <TaskItem>{task.girl}</TaskItem>
    <TaskItem $open>{task.notepad}</TaskItem>
    <TaskItem $open>{task.npp}</TaskItem>
    <TaskItem $open $lift={2}>{task.cmd}</TaskItem>
    <TaskItem $active $width={86.5}>{task.java}</TaskItem>
    <Spacer />
    <TrayItem $width={54}>{tray.usb}</TrayItem>
    <TrayItem $width={56}><Chrome size={27} /></TrayItem>
    <TrayItem $width={58}>{tray.bluetooth}</TrayItem>
    <TrayItem $width={59}>{tray.hkey}</TrayItem>
    <TrayItem $width={59}>{tray.battery}</TrayItem>
    <TrayItem $width={57}>{tray.wifi}</TrayItem>
    <TrayItem $width={57}>{tray.shield}</TrayItem>
    <TrayItem $width={54}>{tray.mute}</TrayItem>
    <TrayItem $width={76}>{tray.keyboard}</TrayItem>
    <TrayItem $width={66}>{tray.touchpad}</TrayItem>
    <Clock>
      <span>11:57 AM</span>
      <span>10/2/2018</span>
    </Clock>
    <TrayItem $width={70}>{tray.notice}</TrayItem>
    <TrayItem $width={16} />
    <ShowDesktop />
  </Taskbar>
);

export default function App() {
  return (
    <Desktop>
      <GlobalStyle />
      <BrowserFrame />
      <WebPage />
      <SystemTaskbar />
      <Notepad />
      <Homework />
    </Desktop>
  );
}
